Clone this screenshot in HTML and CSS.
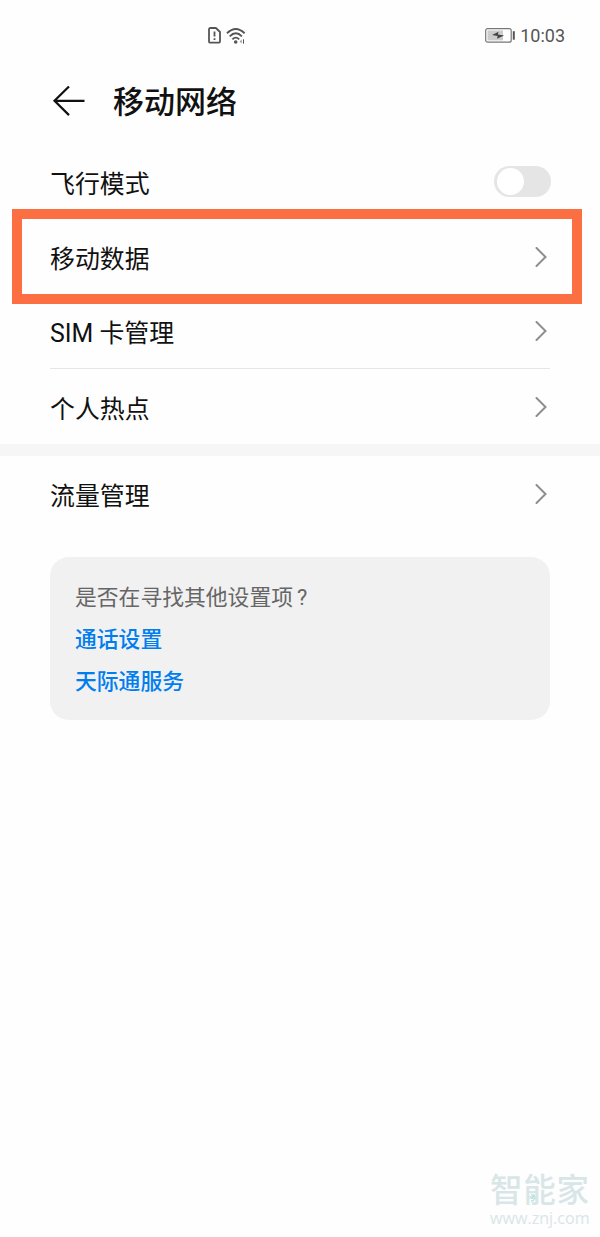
FILE: index.html
```html
<!DOCTYPE html>
<html lang="zh-CN">
<head>
    <meta charset="UTF-8">
    <meta name="viewport" content="width=device-width, initial-scale=1.0">
    <title>移动网络</title>
    <link rel="stylesheet" href="styles.css">
</head>
<body>
    <div class="status-bar">
        <div class="status-left">
            <svg width="13" height="17" viewBox="0 0 13 17" fill="none" stroke="#555" stroke-width="1.8">
                <path d="M2.3 1h5.6L12 5v9.2a1.5 1.5 0 0 1-1.5 1.5H2.3A1.3 1.3 0 0 1 1 14.4V2.3A1.3 1.3 0 0 1 2.3 1z" stroke-linejoin="round"/>
                <path d="M6.5 4.5v5M6.5 11.2v1.8"/>
            </svg>
            <svg width="20" height="18" viewBox="0 0 20 18" fill="none" stroke="#555" stroke-width="1.9">
                <path d="M1 6.2Q9.800-2.400 18.600 6.200M3.700 9.400Q9.800 3.300 15.900 9.400M6.400 12.400Q9.800 8.900 13.200 12.400"/>
                <circle cx="9.700" cy="15" r="1.800" fill="#555" stroke="none"/>
                <path d="M17.500 12.300v4.400" stroke-width="1"/>
                <path d="M15.700 12.600v3.800l-2-1.900z" fill="#999" stroke="none"/>
            </svg>
        </div>
        <div class="status-right">
            <svg width="31" height="16" viewBox="0 0 31 16">
                <rect x="1.7" y="0.6" width="25.5" height="13.6" rx="2" fill="#fff" stroke="#777" stroke-width="1.200"/>
                <rect x="3.5" y="2.4" width="15.5" height="10" fill="#ccc"/>
                <path d="M8 7l6.500-3.200-.6 2.600 6.200 1-7 3.400.5-2.700z" fill="#444"/>
                <rect x="28.800" y="3.200" width="2" height="8.500" fill="#555"/>
            </svg>
            <span class="time">10:03</span>
        </div>
    </div>

    <div class="header">
        <svg class="back" width="34" height="32" viewBox="0 0 34 32" fill="none" stroke="#111" stroke-width="2.2">
            <path d="M18 0.500L3.500 14.800 18 29.100M3.500 14.800h30"/>
        </svg>
        <h1>移动网络</h1>
    </div>

    <div class="list">
        <div class="row">
            <span>飞行模式</span>
            <div class="switch"></div>
        </div>
        <div class="row highlight">
            <span>移动数据</span>
            <svg class="arrow" viewBox="0 0 12 20"><path d="M1.500 1l9 9-9 9"/></svg>
        </div>
        <div class="row line">
            <span>SIM 卡管理</span>
            <svg class="arrow" viewBox="0 0 12 20"><path d="M1.500 1l9 9-9 9"/></svg>
        </div>
        <div class="row">
            <span>个人热点</span>
            <svg class="arrow" viewBox="0 0 12 20"><path d="M1.500 1l9 9-9 9"/></svg>
        </div>
    </div>

    <div class="divider"></div>

    <div class="list">
        <div class="row">
            <span>流量管理</span>
            <svg class="arrow" viewBox="0 0 12 20"><path d="M1.500 1l9 9-9 9"/></svg>
        </div>
    </div>

    <div class="card">
        <p>是否在寻找其他设置项<span class="mark">?</span></p>
        <a>通话设置</a>
        <a>天际通服务</a>
    </div>

    <div class="watermark">
        <div class="brand">智能家</div>
        <svg class="brand-dot" viewBox="0 0 6 8"><path d="M1 1h3.500L1.500 5M5 4L3 7H1"/></svg>
        <div class="site">www.znj.com</div>
    </div>
</body>
</html>
```

FILE: styles.css
```css
* {
    box-sizing: border-box;
}
body {
    margin: 0;
    height: 1237px;
    background: #fefefe;
    color: #111;
    font-family: Roboto, "Noto Sans CJK SC", sans-serif;
    position: relative;
    overflow: hidden;
}
svg {
    display: block;
}
.status-bar {
    display: flex;
    justify-content: space-between;
    align-items: center;
    height: 71px;
    padding: 0 35px 0 208px;
}
.status-left {
    display: flex;
    align-items: center;
    gap: 5px;
}
.status-right {
    display: flex;
    align-items: center;
    gap: 5px;
}
.time {
    color: #555;
    font-size: 18px;
    line-height: 20px;
    padding-top: 1px;
}
.header {
    display: flex;
    align-items: center;
    height: 61px;
    padding-left: 51px;
}
h1 {
    margin: 0 0 0 28px;
    padding-top: 3px;
    font-size: 31px;
    line-height: 40px;
    font-weight: 500;
}
.list {
    padding: 0 50px;
}
.header + .list {
    padding-top: 12px;
}
.row {
    display: flex;
    justify-content: space-between;
    align-items: center;
    height: 75px;
    font-size: 24.9px;
    position: relative;
}
.line {
    border-bottom: 1px solid #e6e6e6;
}
.arrow {
    width: 12px;
    height: 20px;
    margin-right: 3px;
    fill: none;
    stroke: #8e8e8e;
    stroke-width: 2;
    stroke-linecap: round;
}
.switch {
    width: 57px;
    height: 31px;
    padding: 2px 3px;
    margin-right: -1px;
    border-radius: 16px;
    background: #e5e5e5;
}
.switch::before {
    content: "";
    display: block;
    width: 27px;
    height: 27px;
    border-radius: 50%;
    background: #fff;
}
/* orange frame around the row */
.highlight::after {
    content: "";
    box-sizing: border-box;
    position: absolute;
    top: -10px;
    left: -38px;
    width: 570px;
    height: 95px;
    border: 10px solid #fb6f42;
}
.divider {
    height: 12px;
    background: #f6f6f6;
}
.card {
    margin: 26px 50px 0;
    height: 163px;
    padding: 20px 25px;
    border-radius: 19px;
    background: #f1f1f1;
    font-size: 21.8px;
    line-height: 42px;
}
.card p {
    margin: 0;
    color: #666;
}
.mark {
    margin-left: 4px;
}
.card a {
    display: block;
    color: #007dee;
    font-weight: 500;
}
.watermark {
    position: absolute;
    left: 490px;
    top: 1173px;
    color: #d9e6e7;
}
.brand {
    font-size: 32.5px;
    letter-spacing: 0.8px;
    line-height: 37px;
    font-weight: 500;
}
.brand-dot {
    position: absolute;
    left: 40px;
    top: 21px;
    width: 6px;
    height: 8px;
    fill: none;
    stroke: #8fe0d6;
}
.site {
    font-family: "Open Sans", sans-serif;
    font-size: 16.1px;
    line-height: 17px;
}
```
